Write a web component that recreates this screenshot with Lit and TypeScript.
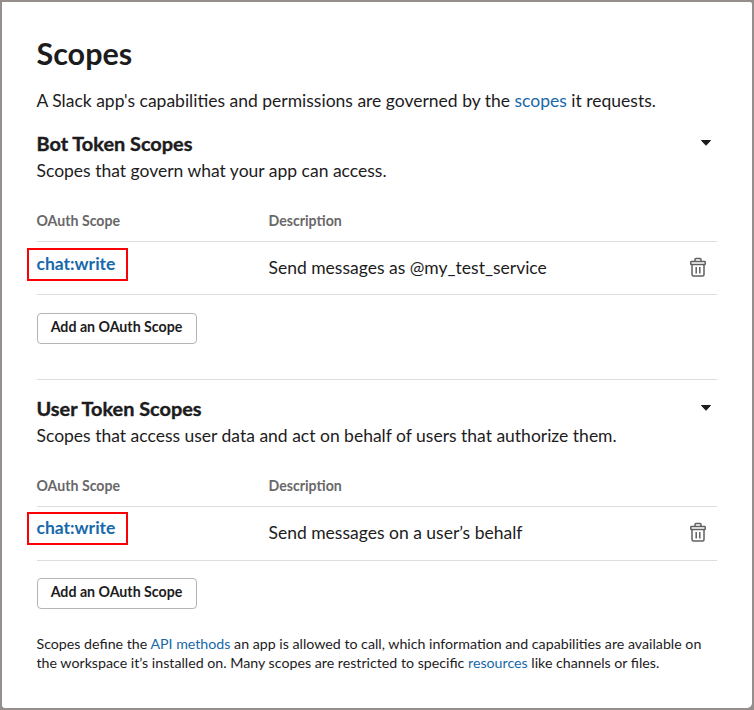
import { LitElement, html, css } from "lit";
import { customElement, property } from "lit/decorators.js";

@customElement("scope-section")
class ScopeSection extends LitElement {
  @property() heading = "";
  @property() summary = "";
  @property() scope = "";
  @property() description = "";

  static styles = css`
    :host { display: block; }
    * { box-sizing: border-box; }
    .head { display: flex; justify-content: space-between; height: 28px; }
    h2 { margin: 0; font-size: 19.9px; line-height: 26px; font-weight: 700; -webkit-text-stroke: 0.4px #1d1c1d; }
    .caret { margin: 9px 5px 0 0; width: 12px; height: 8px; }
    p { margin: 0; font-size: 17.51px; line-height: 26px; }
    .row { display: grid; grid-template-columns: 232px 1fr auto; border-bottom: 1px solid #ddd; }
    .labels { margin-top: 27px; height: 31px; font-size: 14.15px; line-height: 20px; font-weight: 700; color: #696869; }
    .entry { height: 53px; }
    .scope { width: 101px; height: 33px; margin: 6px 0 0 -9.5px; padding-left: 7.5px; border: 2px solid #fb0007; font-size: 17.5px; line-height: 28px; font-weight: 700; color: #1768aa; }
    .desc { font-size: 17.51px; line-height: 52px; }
    .trash { width: 18px; height: 20px; margin: 15px 10.4px 0 0; }
    button { display: block; margin: 18px 0 0; width: 160px; height: 31px; padding: 0 0 4px; border: 1px solid #b4b4b4; border-radius: 4px; background: #fff; color: #1d1c1d; font: 700 14.2px Lato, sans-serif; }
    :host([tall]) .entry { height: 54px; }
    :host([tall]) .scope { margin-top: 5px; }
    :host([tall]) button { margin-top: 17px; }
  `;

  render() {
    return html`
      <div class="head"><h2>${this.heading}</h2><svg class="caret" viewBox="0 0 12 8"><path d="M1.5 1.5h9L6 6.300z" fill="#1d1c1d" stroke="#1d1c1d" stroke-linejoin="round"/></svg></div>
      <p>${this.summary}</p>
      <div class="row labels"><span>OAuth Scope</span><span>Description</span></div>
      <div class="row entry">
        <div class="scope">${this.scope}</div>
        <div class="desc">${this.description}</div>
        <svg class="trash" viewBox="0 0 18 20" fill="none" stroke="#616061" stroke-width="1.5"><path d="M6 4V2.500Q6 1.500 7 1.500h4q1 0 1 1V4M2.300 4.500h13.400q.5 0 .5.5v2q0 .5-.5.5H2.300q-.5 0-.5-.5V5q0-.5.5-.5zM3 7.500v10q0 1.500 1.500 1.500h9q1.500 0 1.500-1.500v-10M7.200 10v6.500M10.800 10v6.500"/></svg>
      </div>
      <button>Add an OAuth Scope</button>
    `;
  }
}

@customElement("app-root")
class AppRoot extends LitElement {
  static styles = css`
    :host { display: block; box-sizing: border-box; width: 754px; height: 710px; padding: 2px; font-family: Lato, sans-serif; color: #1d1c1d; background: #968e8d; }
    .card { box-sizing: border-box; height: 706px; padding: 33px 35px 0 34.5px; border-radius: 0 2px 5px 3px; background: #fff; overflow: hidden; }
    h1 { margin: 0; font-size: 30.5px; line-height: 36px; font-weight: 700; }
    p { margin: 0; }
    a { color: #1768aa; text-decoration: none; }
    .intro { margin: 18px 0 17px; font-size: 17.51px; line-height: 24px; }
    .divider { height: 1px; margin: 35px 0 15px; background: #ddd; }
    .note { margin-top: 25px; font-size: 14.21px; line-height: 19px; white-space: nowrap; }
  `;

  render() {
    return html`<main class="card">
      <h1>Scopes</h1>
      <p class="intro">A Slack app's capabilities and permissions are governed by the <a href="#">scopes</a> it requests.</p>
      <scope-section heading="Bot Token Scopes" summary="Scopes that govern what your app can access." scope="chat:write" description="Send messages as @my_test_service"></scope-section>
      <div class="divider"></div>
      <scope-section tall heading="User Token Scopes" summary="Scopes that access user data and act on behalf of users that authorize them." scope="chat:write" description="Send messages on a user’s behalf"></scope-section>
      <p class="note">Scopes define the <a href="#">API methods</a> an app is allowed to call, which information and capabilities are available on<br>the workspace it’s installed on. Many scopes are restricted to specific <a href="#">resources</a> like channels or files.</p>
    </main>`;
  }
}
